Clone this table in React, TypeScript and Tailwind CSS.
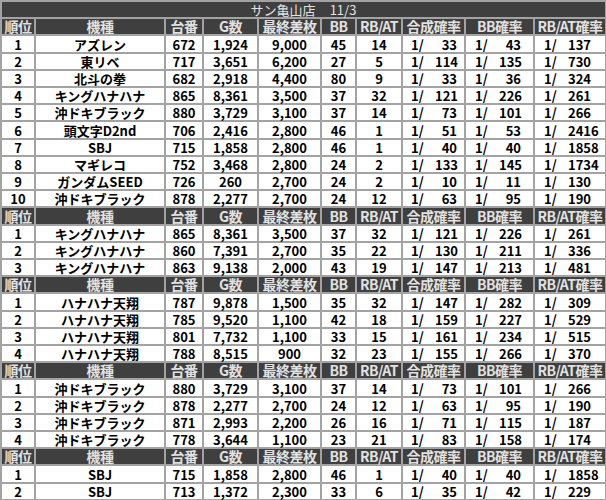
import React from "react";

type Row = [string, string, string, string, string, string, string, string, string, string];

const sections: Row[][] = [
  [
    ["1", "アズレン", "672", "1,924", "9,000", "45", "14", "33", "43", "137"],
    ["2", "東リベ", "717", "3,651", "6,200", "27", "5", "114", "135", "730"],
    ["3", "北斗の拳", "682", "2,918", "4,400", "80", "9", "33", "36", "324"],
    ["4", "キングハナハナ", "865", "8,361", "3,500", "37", "32", "121", "226", "261"],
    ["5", "沖ドキブラック", "880", "3,729", "3,100", "37", "14", "73", "101", "266"],
    ["6", "頭文字D2nd", "706", "2,416", "2,800", "46", "1", "51", "53", "2416"],
    ["7", "SBJ", "715", "1,858", "2,800", "46", "1", "40", "40", "1858"],
    ["8", "マギレコ", "752", "3,468", "2,800", "24", "2", "133", "145", "1734"],
    ["9", "ガンダムSEED", "726", "260", "2,700", "24", "2", "10", "11", "130"],
    ["10", "沖ドキブラック", "878", "2,277", "2,700", "24", "12", "63", "95", "190"],
  ],
  [
    ["1", "キングハナハナ", "865", "8,361", "3,500", "37", "32", "121", "226", "261"],
    ["2", "キングハナハナ", "860", "7,391", "2,700", "35", "22", "130", "211", "336"],
    ["3", "キングハナハナ", "863", "9,138", "2,000", "43", "19", "147", "213", "481"],
  ],
  [
    ["1", "ハナハナ天翔", "787", "9,878", "1,500", "35", "32", "147", "282", "309"],
    ["2", "ハナハナ天翔", "785", "9,520", "1,100", "42", "18", "159", "227", "529"],
    ["3", "ハナハナ天翔", "801", "7,732", "1,100", "33", "15", "161", "234", "515"],
    ["4", "ハナハナ天翔", "788", "8,515", "900", "32", "23", "155", "266", "370"],
  ],
  [
    ["1", "沖ドキブラック", "880", "3,729", "3,100", "37", "14", "73", "101", "266"],
    ["2", "沖ドキブラック", "878", "2,277", "2,700", "24", "12", "63", "95", "190"],
    ["3", "沖ドキブラック", "871", "2,993", "2,200", "26", "16", "71", "115", "187"],
    ["4", "沖ドキブラック", "778", "3,644", "1,100", "23", "21", "83", "158", "174"],
  ],
  [
    ["1", "SBJ", "715", "1,858", "2,800", "46", "1", "40", "40", "1858"],
    ["2", "SBJ", "713", "1,372", "2,300", "33", "6", "35", "42", "229"],
  ],
];

const headers = ["順位", "機種", "台番", "G数", "最終差枚", "BB", "RB/AT", "合成確率", "BB確率", "RB/AT確率"];

const gridCls =
  "grid grid-cols-[32px_128px_36px_53px_61px_33px_44px_61px_67px_70px] gap-x-[2px] flex-1 min-h-0";

function HeaderRow() {
  return (
    <div className={gridCls}>
      {headers.map((h) => (
        <div
          key={h}
          className="bg-[#3f3f3f] text-[#e2e2e2] text-[14px] leading-[15px] font-bold flex items-center justify-center whitespace-nowrap tracking-[-0.5px]"
        >
          {h}
        </div>
      ))}
    </div>
  );
}

function Ratio({ v, pl }: { v: string; pl: string }) {
  return (
    <div className={`bg-white flex items-center ${pl}`}>
      <span className="w-[24px]">1/</span>
      <span className="min-w-[22px] text-right">{v}</span>
    </div>
  );
}

function DataRow({ r }: { r: Row }) {
  const c = "bg-white flex items-center justify-center whitespace-nowrap";
  return (
    <div className={gridCls}>
      <div className={c}>{r[0]}</div>
      <div className={c}>{r[1]}</div>
      <div className={c}>{r[2]}</div>
      <div className={c}>{r[3]}</div>
      <div className={c}>{r[4]}</div>
      <div className={c}>{r[5]}</div>
      <div className={c}>{r[6]}</div>
      <Ratio v={r[7]} pl="pl-[8px]" />
      <Ratio v={r[8]} pl="pl-[9px]" />
      <Ratio v={r[9]} pl="pl-[9px]" />
    </div>
  );
}

export default function App() {
  return (
    <div className="w-[606px] h-[500px] bg-[#a3a3a3] flex flex-col gap-y-[2px] pt-[2px] pb-[1px] pl-[2px] pr-[1px] font-['Noto_Sans_CJK_JP','Noto_Sans',sans-serif] text-[13px] font-bold text-black leading-[15px] overflow-hidden">
      <div className="flex-1 min-h-0 bg-[#3f3f3f] text-[#e2e2e2] font-normal text-[13px] flex items-center justify-center gap-[14px]">
        <span>サン亀山店</span>
        <span>11/3</span>
      </div>
      {sections.map((rows, i) => (
        <React.Fragment key={i}>
          <HeaderRow />
          {rows.map((r, j) => (
            <DataRow key={j} r={r} />
          ))}
        </React.Fragment>
      ))}
    </div>
  );
}
